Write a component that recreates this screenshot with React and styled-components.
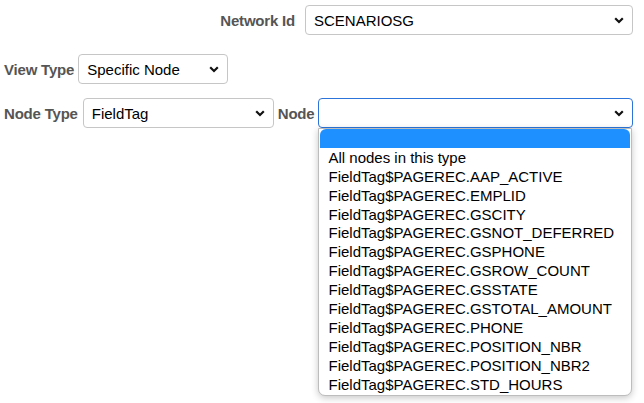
import React from 'react';
import styled, { createGlobalStyle } from 'styled-components';

const GlobalStyle = createGlobalStyle`
  html, body {
    margin: 0;
    padding: 0;
    background: #fff;
  }
  body {
    font-family: "Liberation Sans", Arial, sans-serif;
    font-size: 15px;
    color: #000;
  }
`;

const nodes = [
  'All nodes in this type',
  'FieldTag$PAGEREC.AAP_ACTIVE',
  'FieldTag$PAGEREC.EMPLID',
  'FieldTag$PAGEREC.GSCITY',
  'FieldTag$PAGEREC.GSNOT_DEFERRED',
  'FieldTag$PAGEREC.GSPHONE',
  'FieldTag$PAGEREC.GSROW_COUNT',
  'FieldTag$PAGEREC.GSSTATE',
  'FieldTag$PAGEREC.GSTOTAL_AMOUNT',
  'FieldTag$PAGEREC.PHONE',
  'FieldTag$PAGEREC.POSITION_NBR',
  'FieldTag$PAGEREC.POSITION_NBR2',
  'FieldTag$PAGEREC.STD_HOURS',
];

const Page = styled.div`
  padding: 5px 11px 0 4px;
  width: 644px;
  height: 403px;
  box-sizing: border-box;
`;

const Row = styled.div`
  display: flex;
  align-items: center;
  justify-content: ${(p) => (p.$right ? 'flex-end' : 'flex-start')};
  margin-top: ${(p) => p.$top || 0}px;
`;

const Label = styled.label`
  font-weight: bold;
  color: #555;
  font-size: 15px;
  letter-spacing: -0.2px;
  margin-right: ${(p) => p.$gap || 4}px;
  margin-left: ${(p) => p.$left || 0}px;
  white-space: nowrap;
`;

const Field = styled.div`
  position: relative;
  flex: ${(p) => (p.$grow ? '1' : 'none')};
  width: ${(p) => (p.$width ? `${p.$width}px` : 'auto')};
`;

const SelectBox = styled.div`
  box-sizing: border-box;
  height: 30px;
  display: flex;
  align-items: center;
  justify-content: space-between;
  padding: 0 8px 0 8px;
  border: 1px solid ${(p) => (p.$focused ? '#2d74da' : '#c6c6c6')};
  border-radius: 4px;
  background: #fff;
  font-size: 15px;
  color: #000;
`;

const Chevron = () => (
  <svg width="10" height="7" viewBox="0 0 10 7">
    <polyline points="1.2,1.3 5,5 8.8,1.3" fill="none" stroke="#111" strokeWidth="2.2" />
  </svg>
);

const Dropdown = styled.ul`
  position: absolute;
  top: 30px;
  left: 0;
  right: 1px;
  margin: 0;
  padding: 0 0 2px;
  list-style: none;
  background: #fff;
  border: 1px solid #bdbdbd;
  border-radius: 0 0 7px 7px;
  box-shadow: 0 2px 7px rgba(0, 0, 0, 0.22);
  z-index: 5;
`;

const Option = styled.li`
  height: 18.9px;
  line-height: 19px;
  padding-left: 9px;
  font-size: 15px;
  background: ${(p) => (p.$active ? '#1e90ff' : 'transparent')};
  border-radius: ${(p) => (p.$active ? '6px 6px 0 0' : '0')};
  margin: ${(p) => (p.$active ? '0 1px' : '0')};
  white-space: nowrap;
`;

function Select({ value, focused }) {
  return (
    <SelectBox $focused={focused}>
      <span>{value}</span>
      <Chevron />
    </SelectBox>
  );
}

export default function App() {
  return (
    <>
      <GlobalStyle />
      <Page>
        <Row $right>
          <Label $gap={10}>Network Id</Label>
          <Field $width={328}>
            <Select value="SCENARIOSG" />
          </Field>
        </Row>

        <Row $top={19}>
          <Label>View Type</Label>
          <Field $width={150}>
            <Select value="Specific Node" />
          </Field>
        </Row>

        <Row $top={14}>
          <Label $gap={5}>Node Type</Label>
          <Field $width={191}>
            <Select value="FieldTag" />
          </Field>
          <Label $left={4}>Node</Label>
          <Field $grow>
            <Select value="" focused />
            <Dropdown>
              <Option $active>&nbsp;</Option>
              {nodes.map((n) => (
                <Option key={n}>{n}</Option>
              ))}
            </Dropdown>
          </Field>
        </Row>
      </Page>
    </>
  );
}
